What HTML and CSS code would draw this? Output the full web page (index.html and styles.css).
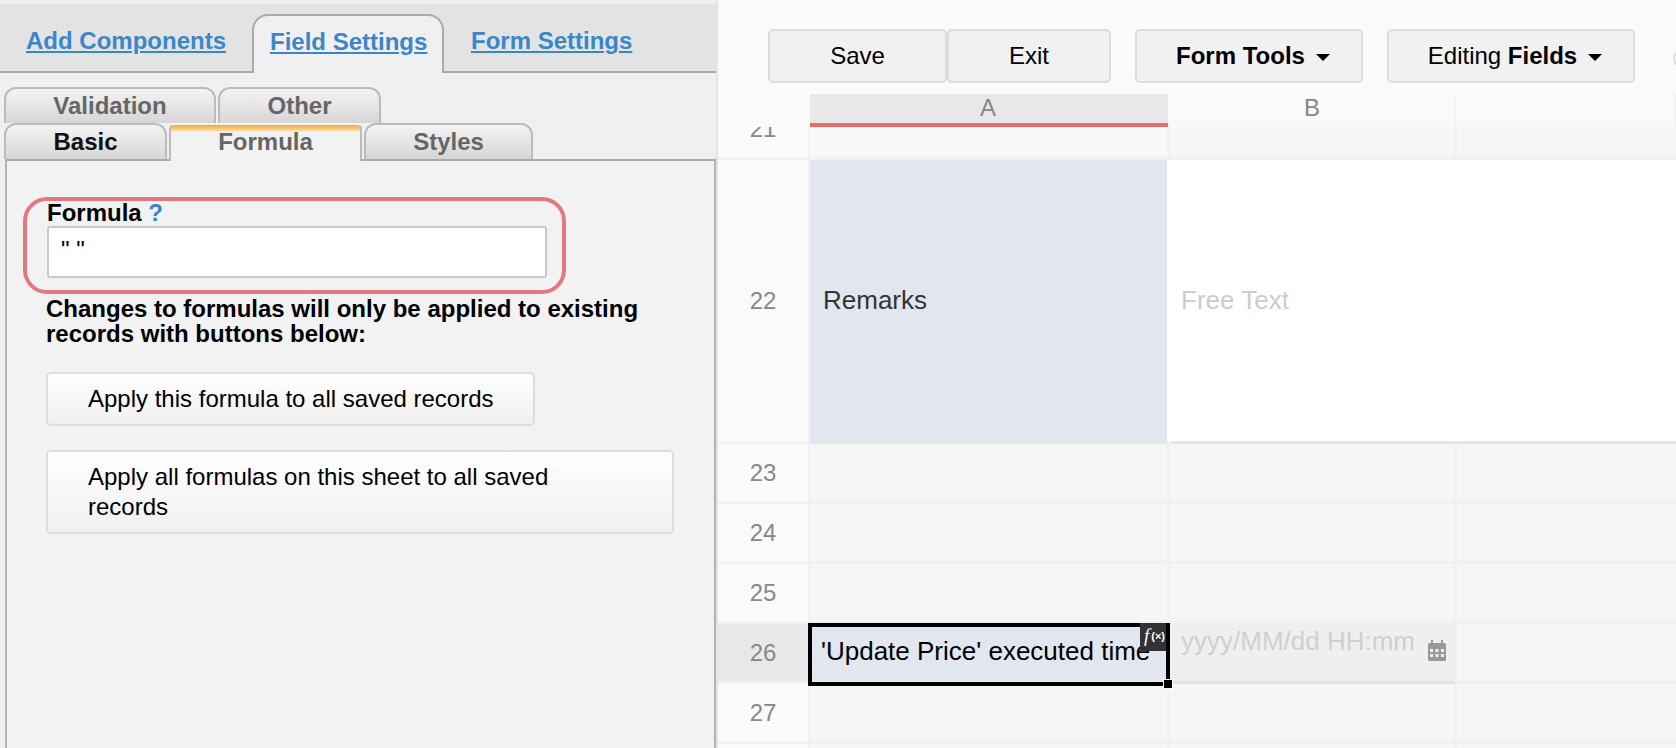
FILE: index.html
```html
<!DOCTYPE html>
<html lang="en">
<head>
    <meta charset="UTF-8">
    <title>Form Builder</title>
    <link rel="stylesheet" href="styles.css">
</head>
<body>
    <!-- Left settings panel -->
    <aside class="panel">
        <div class="main-tabs">
            <a href="#" class="main-tab">Add Components</a>
            <a href="#" class="main-tab active">Field Settings</a>
            <a href="#" class="main-tab">Form Settings</a>
        </div>
        <div class="sub-tabs">
            <div class="sub-row">
                <span class="sub-tab tab-validation">Validation</span>
                <span class="sub-tab tab-other">Other</span>
            </div>
            <div class="sub-row">
                <span class="sub-tab tab-basic">Basic</span>
                <span class="sub-tab tab-formula active">Formula</span>
                <span class="sub-tab tab-styles">Styles</span>
            </div>
        </div>
        <div class="panel-body">
            <div class="formula-box">
                <div class="formula-label">Formula <span class="help">?</span></div>
                <div class="formula-input">" "</div>
            </div>
            <p class="formula-note">Changes to formulas will only be applied to existing records with buttons below:</p>
            <button class="apply-btn apply-one">Apply this formula to all saved records</button>
            <button class="apply-btn apply-all">Apply all formulas on this sheet to all saved records</button>
        </div>
    </aside>

    <!-- Sheet editor -->
    <main class="editor">
        <div class="toolbar">
            <button class="tool-btn btn-save">Save</button>
            <button class="tool-btn btn-exit">Exit</button>
            <button class="tool-btn btn-tools"><b>Form Tools</b><i class="caret"></i></button>
            <button class="tool-btn btn-fields">Editing&nbsp;<b>Fields</b><i class="caret"></i></button>
            <span class="tool-peek"></span>
        </div>
        <div class="col-heads">
            <div class="col-corner"></div>
            <div class="col-head col-a">A</div>
            <div class="col-head col-b">B</div>
            <div class="col-head"></div>
        </div>
        <div class="sheet">
            <div class="row row-21">
                <div class="row-num">21</div>
                <div class="cell cell-light"></div>
                <div class="cell"></div>
                <div class="cell cell-last"></div>
            </div>
            <div class="row row-22">
                <div class="row-num">22</div>
                <div class="cell cell-label">Remarks</div>
                <div class="cell cell-free">Free Text</div>
                <div class="cell cell-white"></div>
            </div>
            <div class="row">
                <div class="row-num">23</div>
                <div class="cell"></div>
                <div class="cell"></div>
                <div class="cell cell-last"></div>
            </div>
            <div class="row">
                <div class="row-num">24</div>
                <div class="cell"></div>
                <div class="cell"></div>
                <div class="cell cell-last"></div>
            </div>
            <div class="row">
                <div class="row-num">25</div>
                <div class="cell"></div>
                <div class="cell"></div>
                <div class="cell cell-last"></div>
            </div>
            <div class="row row-26">
                <div class="row-num">26</div>
                <div class="cell cell-selected">
                    <span class="selected-text">'Update Price' executed time</span>
                    <div class="select-box"></div>
                    <div class="fx-badge"><i>f</i><span>(×)</span></div>
                    <div class="select-handle"></div>
                </div>
                <div class="cell cell-date">
                    <span class="date-text">yyyy/MM/dd HH:mm</span>
                    <svg class="date-icon" viewBox="0 0 18 21" width="18" height="21">
                        <path fill="#999" fill-rule="evenodd" d="M3 0h2v3h8V0h2v3h1.500A1.500 1.500 0 0 1 18 4.500V19.500A1.500 1.500 0 0 1 16.500 21h-15A1.500 1.500 0 0 1 0 19.500V4.500A1.500 1.500 0 0 1 1.500 3H3zM2 9v3h3V9zm5.500 0v3h3V9zM13 9v3h3V9zM2 14v3h3v-3zm5.500 0v3h3v-3zm5.500 0v3h3v-3z"/>
                    </svg>
                </div>
                <div class="cell cell-last"></div>
            </div>
            <div class="row">
                <div class="row-num">27</div>
                <div class="cell"></div>
                <div class="cell"></div>
                <div class="cell cell-last"></div>
            </div>
            <div class="row">
                <div class="row-num"></div>
                <div class="cell"></div>
                <div class="cell"></div>
                <div class="cell cell-last"></div>
            </div>
        </div>
    </main>
</body>
</html>
```

FILE: styles.css
```css
/* Reset */
html, body {
    margin: 0;
    padding: 0;
    height: 748px;
    overflow: hidden;
}

body {
    display: flex;
    font-family: "Liberation Sans", Arial, sans-serif;
    font-size: 24px;
    color: #000;
    background-color: #fafafa;
}

button {
    font-family: inherit;
    font-size: inherit;
    color: inherit;
    cursor: pointer;
}

/* Left panel */
.panel {
    width: 718px;
    flex-shrink: 0;
    box-sizing: border-box;
    background-color: #f0f0f0;
    border-right: 2px solid #e4e4e4;
    display: flex;
    flex-direction: column;
}

.main-tabs {
    height: 69px;
    margin-top: 4px;
    box-sizing: border-box;
    background-color: #e3e3e3;
    border-bottom: 2px solid #aaa;
    display: flex;
    align-items: flex-end;
    font-weight: bold;
}

.main-tab {
    color: #3a87c8;
    height: 53px;
    box-sizing: border-box;
    padding-top: 9px;
}

.main-tab:nth-child(1) {
    margin-left: 26px;
    width: 226px;
}

.main-tab:nth-child(3) {
    margin-left: 27px;
}

.main-tab.active {
    width: 192px;
    height: 59px;
    margin-bottom: -2px;
    padding: 12px 0 0 16px;
    background-color: #f0f0f0;
    border: 2px solid #aaa;
    border-bottom: none;
    border-radius: 16px 16px 0 0;
}

.sub-tabs {
    padding: 14px 0 0 4px;
}

.sub-row {
    display: flex;
    gap: 2px;
    height: 36px;
}

.sub-tab {
    box-sizing: border-box;
    height: 36px;
    text-align: center;
    line-height: 33px;
    font-weight: bold;
    color: #666;
    background: linear-gradient(#f4f4f4, #d6d6d6);
    border: 2px solid #bbb;
    border-bottom: none;
    border-radius: 12px 12px 0 0;
}

.tab-validation { width: 212px; }
.tab-other { width: 163px; }
.tab-basic { width: 163px; color: #111; }
.tab-styles { width: 169px; }

.tab-formula {
    width: 193px;
}

.sub-tab.active {
    position: relative;
    z-index: 1;
    height: 38px;
    background: linear-gradient(#f0a83c, #f8d48c 5px, #f2f2f2 7px);
    border-color: #f2f2f2;
    border-left-color: #bbb;
    border-right-color: #bbb;
    border-radius: 6px 6px 0 0;
}

.panel-body {
    flex: 1;
    margin-left: 5px;
    padding: 36px 0 0 16px;
    background-color: #f2f2f2;
    border-top: 2px solid #aaa;
    border-left: 2px solid #b4b4b4;
    border-right: 2px solid #b4b4b4;
}

.formula-box {
    width: 543px;
    height: 97px;
    box-sizing: border-box;
    border: 4px solid #e07a80;
    border-radius: 24px;
    padding: 0 0 0 20px;
}

.formula-label {
    font-weight: bold;
    line-height: 27px;
    margin-top: -2px;
}

.help {
    color: #3a87c8;
}

.formula-input {
    width: 500px;
    height: 52px;
    box-sizing: border-box;
    background-color: #fff;
    border: 2px solid #c8c8c8;
    border-radius: 3px;
    padding: 10px 0 0 12px;
    line-height: 24px;
}

.formula-note {
    margin: 2px 0 0 23px;
    width: 620px;
    font-weight: bold;
    line-height: 25px;
}

.apply-btn {
    display: block;
    margin: 26px 0 0 23px;
    box-sizing: border-box;
    padding: 0 40px;
    text-align: left;
    line-height: 30px;
    background: linear-gradient(#fff, #f0f0f0);
    border: 2px solid #ddd;
    border-radius: 5px;
}

.apply-one {
    width: 489px;
    height: 54px;
    padding-right: 20px;
}

.apply-all {
    width: 628px;
    height: 84px;
    margin-top: 24px;
}

/* Editor */
.editor {
    flex: 1;
    min-width: 0;
    display: flex;
    flex-direction: column;
}

.toolbar {
    height: 94px;
    box-sizing: border-box;
    padding: 29px 0 0 50px;
    display: flex;
    align-items: flex-start;
}

.tool-btn {
    flex-shrink: 0;
    height: 54px;
    padding: 0;
    background-color: #f1f1f1;
    border: 2px solid #ddd;
    border-radius: 5px;
}

.btn-save { width: 179px; }
.btn-exit { width: 164px; }
.btn-tools { width: 228px; margin-left: 24px; padding-left: 8px; }
.btn-fields { width: 248px; margin-left: 24px; padding-left: 8px; }

.caret {
    display: inline-block;
    margin-left: 11px;
    vertical-align: 3px;
    border-left: 7px solid transparent;
    border-right: 7px solid transparent;
    border-top: 7px solid #000;
}

.tool-peek {
    width: 8px;
    height: 12px;
    flex-shrink: 0;
    margin: 22px 0 0 38px;
    border: 2px solid #ddd;
    border-radius: 50%;
}

.col-heads {
    height: 33px;
    display: grid;
    grid-template-columns: 92px 358px 288px 1fr;
    color: #888;
    font-size: 24px;
}

.col-head {
    text-align: center;
    line-height: 28px;
    border-right: 2px solid #f2f2f2;
}

.col-a {
    padding-right: 2px;
    background-color: #e8e8e8;
    border-right: none;
    border-bottom: 4px solid #e96a6f;
}

.col-b {
    padding-left: 2px;
}

.sheet {
    flex: 1;
    overflow: hidden;
}

.row {
    height: 60px;
    display: grid;
    grid-template-columns: 92px 360px 287px 1fr;
}

.row-21 {
    margin-top: -27px;
}

.row-22 {
    height: 284px;
}

.row-num {
    box-sizing: border-box;
    display: flex;
    align-items: center;
    justify-content: center;
    color: #888;
    background-color: #fafafa;
    border-right: 2px solid #f1f1f1;
    border-bottom: 3px solid #f1f1f1;
}

.cell {
    box-sizing: border-box;
    min-width: 0;
    display: flex;
    align-items: center;
    font-size: 26px;
    background-color: #f6f6f6;
    border-right: 3px solid #f1f1f1;
    border-bottom: 3px solid #f1f1f1;
}

.cell-last {
    border-right: none;
}

.cell-light {
    background-color: #f9f9f9;
}

.cell-label {
    padding-left: 13px;
    color: #333;
    background-color: #e1e6ef;
    border-right-color: #fff;
    border-bottom-color: #e6e6e6;
}

.cell-free {
    padding-left: 11px;
    color: #ccc;
    background-color: #fff;
    border-right: none;
    border-bottom-color: #e6e6e6;
}

.cell-white {
    background-color: #fff;
    border-right: none;
    border-bottom-color: #e6e6e6;
}

.row-26 .row-num {
    background-color: #e8e8e8;
}

.cell-selected {
    position: relative;
    padding-left: 11px;
    background-color: #e1e6ef;
}

.selected-text {
    white-space: nowrap;
    position: relative;
    top: -1px;
}

.select-box {
    position: absolute;
    top: -1px;
    left: -2px;
    width: 362px;
    height: 63px;
    box-sizing: border-box;
    border: 4px solid #000;
}

.fx-badge {
    position: absolute;
    top: -1px;
    left: 330px;
    width: 26px;
    height: 28px;
    padding: 2px 0 0 4px;
    box-sizing: border-box;
    background-color: #333;
    color: #fff;
    line-height: 16px;
    white-space: nowrap;
}

.fx-badge i {
    font-family: "Liberation Serif", serif;
    font-size: 19px;
    margin-right: 2px;
}

.fx-badge span {
    font-size: 11px;
    font-weight: bold;
    vertical-align: 2px;
}

.select-handle {
    position: absolute;
    left: 353px;
    top: 55px;
    width: 8px;
    height: 8px;
    background-color: #000;
    border: 1px solid #fff;
}

.cell-date {
    padding: 0 8px 0 11px;
    font-size: 26px;
    color: #d0d0d0;
    background-color: #efefef;
    border-bottom-color: #e3e3e3;
}

.date-text {
    white-space: nowrap;
    position: relative;
    top: -11px;
}

.date-icon {
    flex-shrink: 0;
    margin-left: 13px;
    position: relative;
    top: -2px;
}
```
